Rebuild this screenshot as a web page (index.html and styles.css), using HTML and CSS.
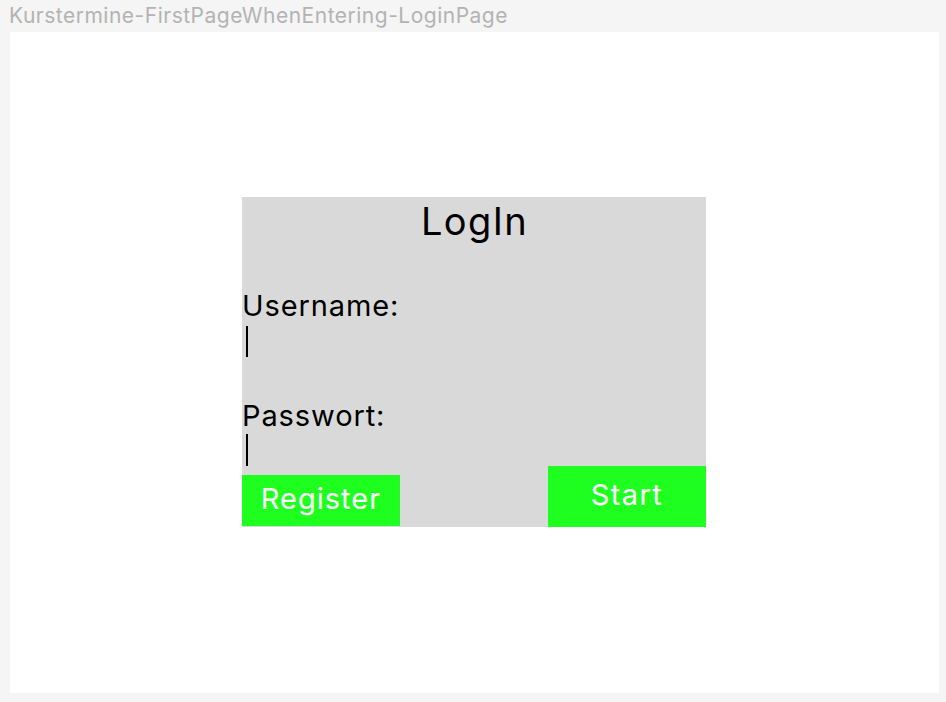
FILE: index.html
```html
<!DOCTYPE html>
<html>
<head>
<meta charset="utf-8">
<link rel="stylesheet" href="styles.css">
</head>
<body>
<div class="page-title">Kurstermine-FirstPageWhenEntering-LoginPage</div>
<div class="frame">
  <div class="card">
    <div class="card-title">LogIn</div>
    <div class="label label-user">Username:</div>
    <div class="cursor cursor-user"></div>
    <div class="label label-pass">Passwort:</div>
    <div class="cursor cursor-pass"></div>
    <div class="actions">
      <div class="btn btn-register">Register</div>
      <div class="btn btn-start">Start</div>
    </div>
  </div>
</div>
</body>
</html>
```
FILE: styles.css
```css
html, body {
  margin: 0;
  padding: 0;
}
body {
  background: #f5f5f5;
  font-family: "Inter", "Liberation Sans", sans-serif;
  width: 946px;
  height: 702px;
  overflow: hidden;
}
.page-title {
  color: #b3b3b3;
  font-size: 21px;
  letter-spacing: 0.5px;
  line-height: 24px;
  height: 32px;
  padding-left: 9px;
  padding-top: 4px;
  box-sizing: border-box;
}
.frame {
  margin-left: 10px;
  width: 929px;
  height: 661px;
  background: #ffffff;
  padding: 165px 0 0 232px;
  box-sizing: border-box;
}
.card {
  width: 464px;
  height: 330px;
  background: #d9d9d9;
  display: flex;
  flex-direction: column;
  color: #000;
}
.card-title {
  font-size: 38px;
  letter-spacing: 1.4px;
  line-height: 43px;
  height: 43px;
  margin-top: 3px;
  text-align: center;
  padding-left: 1px;
}
.label {
  font-size: 29px;
  letter-spacing: 0.9px;
  line-height: 34px;
  height: 34px;
}
.label-user {
  margin-top: 46px;
}
.label-pass {
  margin-top: 42px;
}
.cursor {
  width: 2px;
  background: #000;
  margin-left: 4px;
}
.cursor-user {
  margin-top: 3px;
  height: 35px;
}
.cursor-pass {
  margin-top: 1px;
  height: 36px;
}
.actions {
  margin-top: auto;
  display: flex;
  justify-content: space-between;
  align-items: flex-end;
}
.btn {
  background: #1fff1f;
  color: #ffffff;
  font-size: 29px;
  letter-spacing: 1px;
  display: flex;
  align-items: center;
  justify-content: center;
  width: 158px;
  box-sizing: border-box;
}
.btn-register {
  height: 51px;
  margin-bottom: 1px;
  padding-bottom: 4px;
}
.btn-start {
  height: 61px;
  padding-bottom: 4px;
  letter-spacing: 1.4px;
}
```
